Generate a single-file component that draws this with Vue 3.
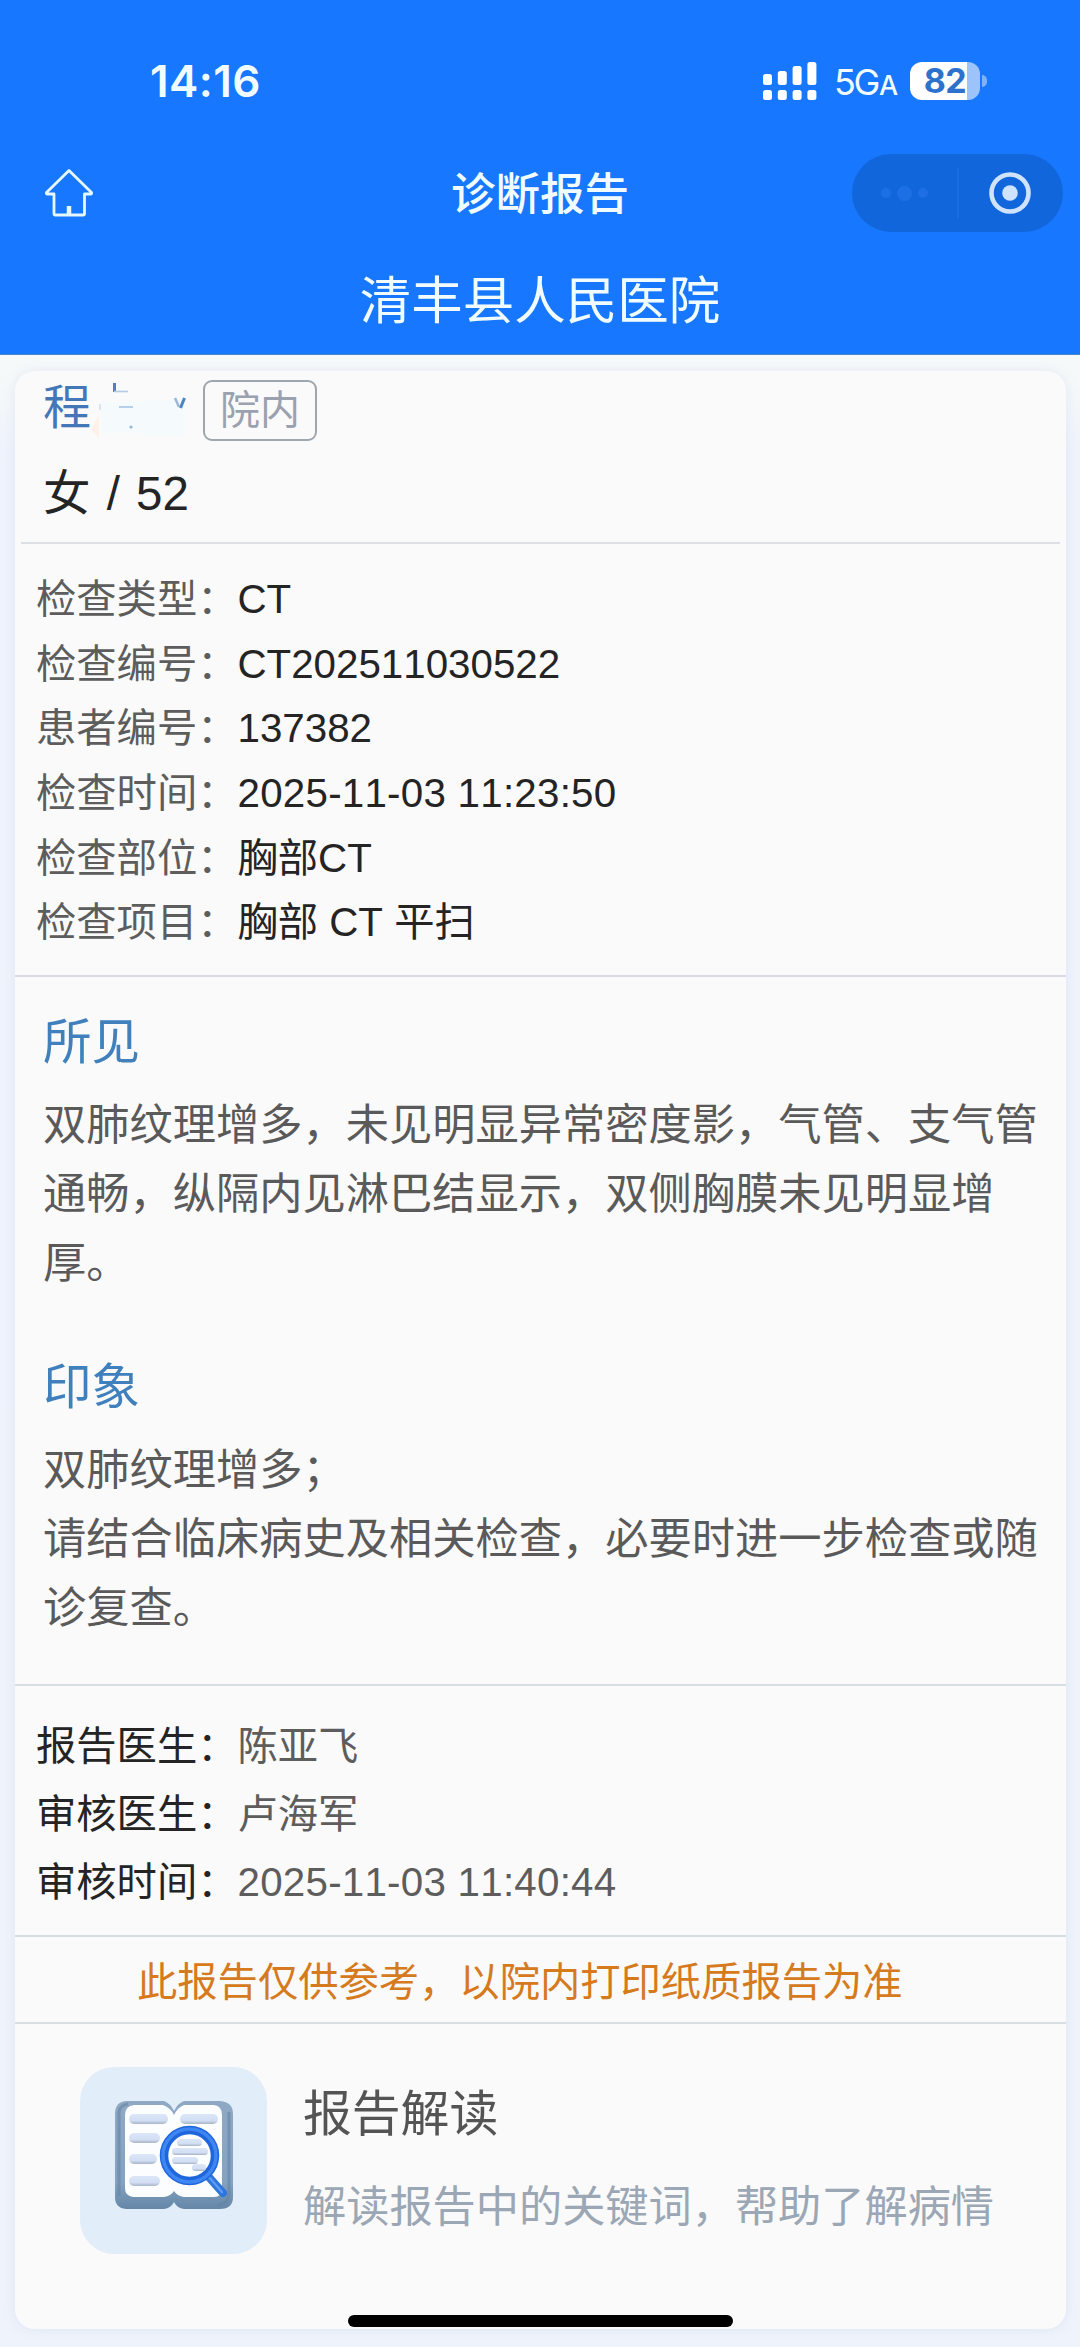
<template>
  <div class="page">
    <header class="header">
      <div class="status-bar">
        <span class="time">14:16</span>
        <div class="status-right">
          <svg class="signal" width="54" height="38" viewBox="0 0 54 38" fill="#fff">
            <g v-for="(bar, i) in signalBars" :key="i">
              <rect :x="i * 14.8" :y="bar.y" width="9" :height="bar.h" rx="2.5" />
              <rect :x="i * 14.8" y="28" width="9" height="10" rx="2.5" />
            </g>
          </svg>
          <span class="network">5G<small>A</small></span>
          <div class="battery">
            <span>82</span>
          </div>
          <i class="battery-cap"></i>
        </div>
      </div>

      <div class="nav-bar">
        <svg class="home-icon" width="50" height="50" viewBox="0 0 50 50" fill="none">
          <path
            d="M25 2.5 L47.5 24.5 Q48 26 46.500 26 H40.500 V46 Q40.500 47 39.500 47 H11 Q10 47 10 46 V26 H3.500 Q2 26 2.500 24.500 Z"
            stroke="#e6f8ff"
            stroke-width="2.8"
            stroke-linejoin="round"
          />
          <path d="M25 38 V47" stroke="#e6f8ff" stroke-width="4.500" />
        </svg>
        <h1 class="nav-title">诊断报告</h1>
        <div class="capsule">
          <div class="dots"><i></i><i></i><i></i></div>
          <div class="divider"></div>
          <svg width="44" height="44" viewBox="0 0 44 44">
            <circle cx="22" cy="22" r="18.500" fill="none" stroke="#cfe3ff" stroke-width="4.600" />
            <circle cx="22" cy="22" r="7.800" fill="#cfe3ff" />
          </svg>
        </div>
      </div>
      <h2 class="hospital">清丰县人民医院</h2>
    </header>

    <main class="card">
      <section class="patient">
        <div class="name-row">
          <span class="name">程</span>
          <!-- 姓名脱敏 -->
          <svg class="mask" width="96" height="60" viewBox="0 0 96 60">
            <path d="M2 22 H44 V20 H86 V56 H44 V53 H2 Z" fill="#f5fbfd" />
            <path d="M0 34 V58 L-8 50 Z" fill="#fdf1ea" />
            <path d="M15.500 3 V12" stroke="#4f7fc4" stroke-width="3" />
            <path d="M15 11.500 H29" stroke="#b5cbe4" stroke-width="1.600" />
            <path d="M20 27 H34" stroke="#b7d0ea" stroke-width="2" />
            <path d="M76 18 L80 27" stroke="#9ab6d8" stroke-width="2.500" />
            <path d="M85.500 18 L81.500 28" stroke="#4c84bd" stroke-width="3" />
            <circle cx="32" cy="47" r="1.600" fill="#8db8e0" />
            <path d="M1 24 V30" stroke="#d4dbe6" stroke-width="1.500" />
          </svg>
          <span class="tag">院内</span>
        </div>
        <div class="sex-age">女 / 52</div>
      </section>

      <section class="info">
        <div class="info-row" v-for="item in examInfo" :key="item.label">
          <span class="label">{{ item.label }}：</span>
          <span class="value" :class="{ date: item.isDate }">{{ item.value }}</span>
        </div>
      </section>

      <section class="result">
        <h3>所见</h3>
        <p>{{ findings }}</p>
        <h3 class="second">印象</h3>
        <p>{{ impression }}</p>
      </section>

      <section class="doctor">
        <div class="doctor-row" v-for="item in doctorInfo" :key="item.label">
          <span class="label">{{ item.label }}：</span>
          <span class="value" :class="{ date: item.isDate }">{{ item.value }}</span>
        </div>
      </section>

      <div class="notice">此报告仅供参考，以院内打印纸质报告为准</div>

      <section class="explain">
        <div class="explain-icon">
          <svg width="120" height="112" viewBox="0 0 120 112">
            <defs>
              <linearGradient id="cover" x1="0" y1="0" x2="0" y2="1">
                <stop offset="0" stop-color="#8fa9c4" />
                <stop offset="0.750" stop-color="#84a3c0" />
                <stop offset="1" stop-color="#6586a8" />
              </linearGradient>
              <linearGradient id="line" x1="0" y1="0" x2="0" y2="1">
                <stop offset="0" stop-color="#dbe6f9" />
                <stop offset="0.650" stop-color="#d2def3" />
                <stop offset="1" stop-color="#a9b5c6" />
              </linearGradient>
            </defs>
            <path
              d="M12 1 H50 Q56 3 60 11 Q64 3 70 1 H106 Q119 2 119 14 V97 Q119 109 106 109 H70 Q63 108 60 102 Q57 108 50 109 H12 Q1 108 1 97 V14 Q1 2 12 1 Z"
              fill="url(#cover)"
            />
            <path
              d="M5 12 Q6 5 14 4 M115 12 V94 Q114 104 104 105 M5 12 V96"
              fill="none"
              stroke="#6684a4"
              stroke-width="3"
              opacity="0.600"
            />
            <path
              d="M20 5 H49 Q57 8 60 15 Q63 8 70 5 H100 Q108 6 108 15 V88 Q108 97 100 97 H70 Q63 96 60 91 Q57 96 50 97 H19 Q11 96 11 88 V15 Q11 6 20 5 Z"
              fill="#fbfdff"
            />
            <rect
              v-for="(l, i) in bookLines"
              :key="i"
              :x="l.x"
              :y="l.y"
              :width="l.w"
              height="10"
              rx="5"
              fill="url(#line)"
            />
            <path d="M93 75 L109 93" stroke="#2f76dc" stroke-width="8" stroke-linecap="round" />
            <path d="M94 76 L108 92" stroke="#5b9df2" stroke-width="2.500" stroke-linecap="round" />
            <circle cx="75.500" cy="55.500" r="25.500" fill="#fcfeff" stroke="#1f66dd" stroke-width="8.500" />
            <circle cx="75.500" cy="55.500" r="26.500" fill="none" stroke="#3e86f2" stroke-width="3.500" />
            <rect x="63" y="39" width="25" height="7" rx="3.500" fill="url(#line)" />
            <rect x="58" y="48" width="36" height="7" rx="3.500" fill="url(#line)" />
            <rect x="58" y="57" width="26" height="7" rx="3.500" fill="url(#line)" />
            <rect x="78" y="64" width="14" height="7" rx="3.500" fill="url(#line)" />
          </svg>
        </div>
        <div class="explain-text">
          <div class="explain-title">报告解读</div>
          <div class="explain-desc">解读报告中的关键词，帮助了解病情</div>
        </div>
      </section>
    </main>

    <div class="home-indicator"></div>
  </div>
</template>

<script setup>
const signalBars = [
  { y: 12, h: 11 },
  { y: 9, h: 14 },
  { y: 4, h: 19 },
  { y: 0, h: 23 },
];

const examInfo = [
  { label: '检查类型', value: 'CT' },
  { label: '检查编号', value: 'CT202511030522' },
  { label: '患者编号', value: '137382' },
  { label: '检查时间', value: '2025-11-03 11:23:50', isDate: true },
  { label: '检查部位', value: '胸部CT' },
  { label: '检查项目', value: '胸部 CT 平扫' },
];

const findings =
  '双肺纹理增多，未见明显异常密度影，气管、支气管通畅，纵隔内见淋巴结显示，双侧胸膜未见明显增厚。';
const impression =
  '双肺纹理增多；\n请结合临床病史及相关检查，必要时进一步检查或随诊复查。';

const doctorInfo = [
  { label: '报告医生', value: '陈亚飞' },
  { label: '审核医生', value: '卢海军' },
  { label: '审核时间', value: '2025-11-03 11:40:44', isDate: true },
];

const bookLines = [
  { x: 15, y: 14, w: 39 },
  { x: 66, y: 14, w: 38 },
  { x: 15, y: 33, w: 31 },
  { x: 15, y: 54, w: 28 },
  { x: 15, y: 76, w: 31 },
];
</script>

<style>
body {
  margin: 0;
  background: #f0f4fb;
}
</style>

<style scoped>
.page {
  position: relative;
  display: flex;
  flex-direction: column;
  width: 1080px;
  height: 2347px;
  overflow: hidden;
  background: linear-gradient(#f6f9f9 380px, #eff3fc 450px, #eff3fb);
  font-family: 'Liberation Sans', 'Noto Sans CJK SC', sans-serif;
}

h1,
h2,
h3,
p {
  margin: 0;
  font-weight: 400;
}

.header {
  flex: none;
  height: 355px;
  background: #1777ff;
  border-bottom: 1px solid #4a86c4;
  box-sizing: border-box;
  color: #f0fcff;
}

.status-bar {
  display: flex;
  justify-content: space-between;
  align-items: center;
  height: 161px;
  box-sizing: border-box;
  padding: 0 93px 0 150px;
}

.time {
  font-family: Inter, sans-serif;
  font-size: 44px;
  font-weight: 600;
  letter-spacing: 0.4px;
}

.status-right {
  display: flex;
  align-items: center;
}

.network {
  margin-left: 17px;
  width: 60px;
  padding-top: 2px;
  font-family: Inter, sans-serif;
  font-size: 36px;
  letter-spacing: -2.4px;
  white-space: nowrap;
}
.network small {
  margin-left: 1px;
  font-size: 27px;
  font-weight: 500;
}

.battery {
  width: 70px;
  height: 38px;
  margin-left: 16px;
  border-radius: 12px;
  background: linear-gradient(90deg, #fff 57px, #9cc4fb 57px);
  color: #2c72cc;
  font-family: Inter, sans-serif;
  font-size: 34px;
  font-weight: 700;
  letter-spacing: -0.5px;
  line-height: 38px;
  text-align: center;
}
.battery-cap {
  width: 5px;
  height: 12px;
  margin-left: 2px;
  border-radius: 0 5px 5px 0;
  background: #7fb2fb;
}

.nav-bar {
  display: flex;
  align-items: center;
  justify-content: space-between;
  height: 64px;
  padding: 0 17px 0 44px;
}
.home-icon {
  margin-right: 134px;
}

.nav-title {
  padding-top: 3px;
  font-size: 44.5px;
  font-weight: 500;
  line-height: 64px;
}

.capsule {
  display: flex;
  align-items: center;
  width: 211px;
  height: 78px;
  border-radius: 39px;
  background: #1266dc;
}
.dots {
  display: flex;
  align-items: center;
  justify-content: center;
  gap: 6px;
  width: 105px;
}
.dots i {
  width: 10px;
  height: 10px;
  border-radius: 50%;
  background: #1d6fe4;
}
.dots i:nth-child(2) {
  width: 15px;
  height: 15px;
}
.divider {
  width: 2px;
  height: 50px;
  margin-right: 29px;
  background: #1a6de2;
}

.hospital {
  margin-top: 38px;
  font-size: 51.5px;
  line-height: 76px;
  text-align: center;
}

.card {
  width: 1051px;
  height: 1958px;
  margin: 16px 0 0 15px;
  border-radius: 20px;
  background: #fafafa;
  box-shadow: 0 0 12px rgba(190, 205, 235, 0.35);
}

.patient {
  height: 173px;
  box-sizing: border-box;
  margin: 0 6px;
  padding: 9px 0 0 22px;
  border-bottom: 2px solid #dcdfe3;
}
.name-row {
  display: flex;
  align-items: center;
  height: 60px;
}
.name {
  margin-top: -4px;
  font-size: 48px;
  line-height: 60px;
  color: #4377b8;
}
.mask {
  margin: 0 8px;
  overflow: visible;
}
.tag {
  width: 114px;
  height: 61px;
  box-sizing: border-box;
  border: 2px solid #9fa7ae;
  border-radius: 9px;
  font-size: 40px;
  line-height: 56px;
  text-align: center;
  color: #9ba1af;
}
.sex-age {
  margin-top: 22px;
  font-size: 47.5px;
  line-height: 64px;
  word-spacing: 3px;
  color: #242424;
}

.info {
  height: 433px;
  box-sizing: border-box;
  padding: 24px 0 0 21px;
  border-bottom: 2px solid #dadde3;
}
.info-row,
.doctor-row {
  display: flex;
  font-size: 40.3px;
  line-height: 64.7px;
  height: 64.7px;
  white-space: nowrap;
}
.value {
  font-kerning: none;
}
.date {
  letter-spacing: 0.25px;
}
.info-row .label,
.doctor-row .value {
  color: #5d5d5d;
}
.info-row .value,
.doctor-row .label {
  color: #242424;
}

.result {
  height: 709px;
  box-sizing: border-box;
  padding: 29px 20px 0 28px;
  border-bottom: 2px solid #d8dfe2;
}
.result h3 {
  font-size: 48.5px;
  line-height: 72px;
  color: #4080bd;
}
.result .second {
  margin-top: 53px;
}
.result p {
  margin-top: 13px;
  font-size: 43.25px;
  line-height: 69px;
  color: #5a5a5a;
  white-space: pre-wrap;
}

.doctor {
  height: 251px;
  box-sizing: border-box;
  padding: 27px 0 0 21px;
  border-bottom: 2px solid #d6dfe2;
}
.doctor-row {
  height: 68px;
  line-height: 68px;
}

.notice {
  height: 87px;
  box-sizing: border-box;
  padding: 2px 0 0 122px;
  border-bottom: 2px solid #d8dfe2;
  font-size: 40.3px;
  line-height: 88px;
  color: #d67a20;
}

.explain {
  display: flex;
  padding: 43px 0 0 65px;
}
.explain-icon {
  display: flex;
  justify-content: center;
  width: 187px;
  height: 187px;
  box-sizing: border-box;
  padding-top: 33px;
  border-radius: 34px;
  background: #e1edf8;
}
.explain-text {
  margin-left: 36px;
}
.explain-title {
  margin-top: 11px;
  font-size: 48.8px;
  line-height: 72px;
  color: #545454;
}
.explain-desc {
  margin-top: 24px;
  font-size: 43.2px;
  line-height: 66px;
  white-space: nowrap;
  color: #9ba7b4;
}

/* 系统底部横条，覆盖在页面之上 */
.home-indicator {
  position: absolute;
  left: 348px;
  bottom: 20px;
  width: 385px;
  height: 12px;
  border-radius: 6px;
  background: #000;
}
</style>
